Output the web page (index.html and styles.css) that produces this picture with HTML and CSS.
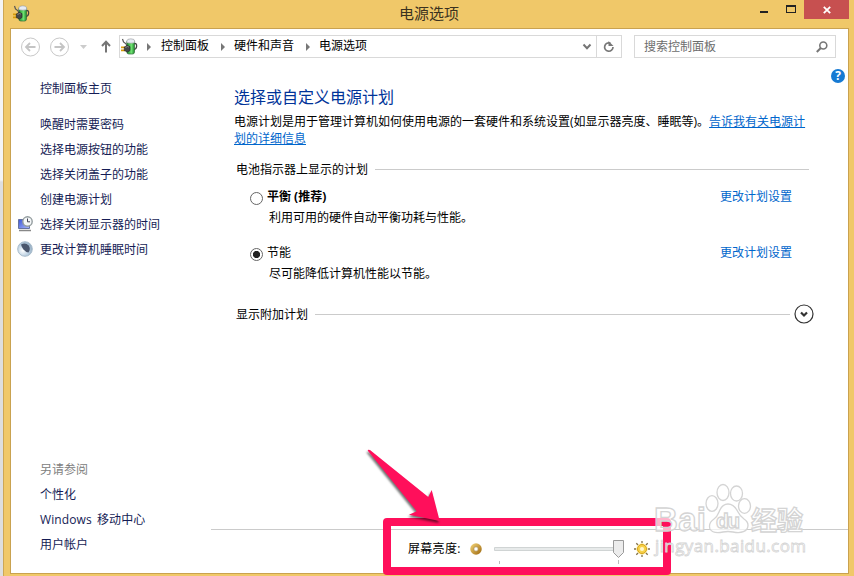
FILE: index.html
```html
<!DOCTYPE html>
<html lang="zh-CN">
<head>
<meta charset="utf-8">
<title>电源选项</title>
<link rel="stylesheet" href="styles.css">
</head>
<body>
<svg class="defs" width="0" height="0" aria-hidden="true">
  <defs>
    <linearGradient id="green" x1="0" x2="1"><stop offset="0" stop-color="#1b8a28"/><stop offset=".6" stop-color="#6fe272"/><stop offset="1" stop-color="#1f8a2c"/></linearGradient>
    <linearGradient id="blue" x1="0" x2="1" y1="0" y2="1"><stop offset="0" stop-color="#3c55d8"/><stop offset="1" stop-color="#a9b8fa"/></linearGradient>
    <linearGradient id="gold" x1="0" x2="1" y1="0" y2="1"><stop offset="0" stop-color="#e8c66a"/><stop offset="1" stop-color="#a9761c"/></linearGradient>
    <radialGradient id="moon" cx=".35" cy=".6" r=".7"><stop offset="0" stop-color="#fff"/><stop offset=".6" stop-color="#b9cfe2"/><stop offset="1" stop-color="#8da5ba"/></radialGradient>
    <symbol id="power" viewBox="0 0 17 17">
      <path d="M13 5.500q3-.5 2.600 3-.2 2.600-3 3.300" fill="none" stroke="#444" stroke-width="1.300"/>
      <rect x="5.800" y="2" width="7.700" height="14" rx="2" fill="url(#green)" stroke="#2f6a38" stroke-width=".7"/>
      <path d="M5.800 3q.2-2.200 4-2.200t3.900 2.200v1.700q-4 1-7.900 0z" fill="#e6ebf3" stroke="#888" stroke-width=".5"/>
      <path d="M1.500 1l1 3 2.500 1.800 1 2.500" fill="none" stroke="#555" stroke-width="1.200"/>
      <path d="M0 9.400h4M0 12.400h4" stroke="#d79b08" stroke-width="1.600"/>
      <path d="M3.300 9l3-1.600 2.700 1.200v3.900l-2.500 1.500-3.200-1.400z" fill="#454848" stroke="#222" stroke-width=".6"/>
      <path d="M4.500 9.500l2-1 1.400.6" fill="none" stroke="#999" stroke-width=".8"/>
    </symbol>
  </defs>
</svg>
<div class="window">
  <header class="titlebar">
    <svg class="app-icon" width="17" height="17"><use href="#power"/></svg>
    <h1>电源选项</h1>
    <div class="controls">
      <svg class="min" width="8" height="19"><path d="M0 11h8v2H0z" fill="#222"/></svg>
      <svg class="max" width="10" height="19"><path d="M0 5h10v8H0zM1 7v5h8V7z" fill="#222" fill-rule="evenodd"/></svg>
      <div class="close"><svg width="8" height="8"><path d="M.8.8l6.400 6.400M7.200.8L.8 7.200" stroke="#fff" stroke-width="1.800"/></svg></div>
    </div>
  </header>
  <div class="client">
    <nav class="nav">
      <svg class="arrows" width="108" height="23" fill="none" stroke="#c8c8c8">
        <circle cx="19.500" cy="12" r="9"/><path d="M15 12h9.500M19 8l-4 4 4 4" stroke="#c4c4c4" stroke-width="1.800"/>
        <circle cx="48.500" cy="12" r="9"/><path d="M43.500 12H53M49 8l4 4-4 4" stroke="#c4c4c4" stroke-width="1.800"/>
        <path d="M69 10h7l-3.500 4z" fill="#ccc" stroke="none"/>
        <path d="M95 17.500V7M91 11l4-4.200 4 4.200" stroke="#757575" stroke-width="2"/>
      </svg>
      <div class="address">
        <svg class="crumb-icon" width="17" height="17"><use href="#power"/></svg>
        <i class="sep first"></i><span>控制面板</span>
        <i class="sep"></i><span>硬件和声音</span>
        <i class="sep"></i><span>电源选项</span>
        <svg class="drop" width="10" height="8"><path d="M1.500 1.500L5 5.200l3.500-3.700" fill="none" stroke="#757575" stroke-width="2"/></svg>
        <div class="refresh"><svg width="12" height="12"><path d="M7.500 2.200A4.200 4.200 0 1 0 10 6" fill="none" stroke="#777" stroke-width="1.700"/><path d="M5.500 0v5h5z" fill="#777"/></svg></div>
      </div>
      <div class="search"><span>搜索控制面板</span>
        <svg width="12" height="12" fill="none" stroke="#777"><circle cx="7.300" cy="4.500" r="3.500" stroke-width="1.600"/><path d="M4.800 7L.8 11" stroke-width="2"/></svg>
      </div>
    </nav>
    <div class="help">?</div>
    <div class="body">
      <aside class="sidebar">
        <a class="home">控制面板主页</a>
        <a>唤醒时需要密码</a>
        <a>选择电源按钮的功能</a>
        <a>选择关闭盖子的功能</a>
        <a>创建电源计划</a>
        <a><svg width="16" height="16"><path d="M1.500 3.500h11v9h-11z" fill="url(#blue)" stroke="#6572a0"/><path d="M2 14.500h12" stroke="#888" stroke-width="1.500"/><circle cx="10.500" cy="5.500" r="4.700" fill="#f4f7f8" stroke="#929b9d" stroke-width="1.400"/><path d="M10.500 2.500v3.300h2.500" fill="none" stroke="#445"/></svg>选择关闭显示器的时间</a>
        <a><svg width="16" height="16"><circle cx="8" cy="8" r="7.300" fill="url(#moon)" stroke="#a9bccb"/><path d="M4 3.500q4.500-2.500 7.700 1 2.300 3.500-.2 7-3-.5-5-3T4 3.500z" fill="#4a566c"/></svg>更改计算机睡眠时间</a>
        <div class="see">另请参阅</div>
        <a>个性化</a>
        <a class="mobility">Windows 移动中心</a>
        <a>用户帐户</a>
      </aside>
      <main class="main">
        <section class="content">
          <h2>选择或自定义电源计划</h2>
          <p class="intro">电源计划是用于管理计算机如何使用电源的一套硬件和系统设置(如显示器亮度、睡眠等)。<a>告诉我有关电源计划的详细信息</a></p>
          <div class="group"><span>电池指示器上显示的计划</span><hr></div>
          <div class="plan">
            <i class="radio"></i>
            <div class="text"><b>平衡 (推荐)</b><p>利用可用的硬件自动平衡功耗与性能。</p></div>
            <a>更改计划设置</a>
          </div>
          <div class="plan">
            <i class="radio on"></i>
            <div class="text"><span>节能</span><p>尽可能降低计算机性能以节能。</p></div>
            <a>更改计划设置</a>
          </div>
          <div class="group more"><span>显示附加计划</span><hr>
            <svg width="20" height="20" fill="none" stroke="#333"><circle cx="10" cy="10" r="9" stroke-width="1.200"/><path d="M7 8.500l3 3 3-3" stroke-width="2.200"/></svg>
          </div>
        </section>
        <footer class="brightness">
          <span>屏幕亮度:</span>
          <svg class="dim" width="12" height="12"><circle cx="6" cy="6" r="4" fill="#fff" stroke="url(#gold)" stroke-width="3.500"/><circle cx="6" cy="6" r="2.200" fill="#fff" stroke="#97732c" stroke-width=".6"/></svg>
          <svg class="slider" width="131" height="26"><path d="M.5 9.500h129v3H.5z" fill="#e7eaea" stroke="#d0d4d4"/><path d="M5.500 23v4M124.500 22v4" stroke="#bbb"/><path d="M119.500 2.500h10v12l-5 5-5-5z" fill="#ececec" stroke="#9a9a9a"/></svg>
          <svg class="bright" width="16" height="16"><path d="M8 0v16M0 8h16M2.300 2.300l11.400 11.400M13.700 2.300L2.300 13.700" stroke="#80704a" stroke-width="1.300"/><circle cx="8" cy="8" r="5.400" fill="#f8d851" stroke="#fff7d0"/><circle cx="8" cy="8" r="4.500" fill="#f7d24b" stroke="#d9a51c"/><circle cx="8" cy="8" r="2" fill="#fff8cf"/></svg>
        </footer>
      </main>
    </div>
  </div>
</div>
<div class="highlight"></div>
<svg class="pointer" width="90" height="90"><path d="M8 11q-1-2 2-1L68.300 57l3.400-7 8 31-30.700-6.300 7.700-3.400z" fill="#ff0f5b"/></svg>
<svg class="watermark" width="170" height="84">
  <g fill="#fff" fill-opacity=".7" stroke="#d4d4d4" stroke-width="1.300">
    <text class="brand" x="4" y="51" textLength="52">Bai</text>
    <ellipse cx="62" cy="23.500" rx="6" ry="7.800"/><ellipse cx="73" cy="12.500" rx="6" ry="8"/><ellipse cx="86.500" cy="13.500" rx="6" ry="7.500"/><ellipse cx="94.500" cy="26" rx="6" ry="7.300"/>
    <path d="M78 24q6 0 10 8 2 4 6 7 6 4 3 10-4 5-14 3-5-1-10 0-10 2-13-3-2-6 4-10 3-2 5-7 3-8 9-8z"/>
    <text class="du" x="66" y="48" textLength="24">du</text>
    <text class="cn" x="101" y="50" textLength="52">经验</text>
    <text class="url" x="5" y="72" textLength="151">jingyan.baidu.com</text>
  </g>
</svg>
</body>
</html>
```
FILE: styles.css
```css
* { box-sizing: border-box; }
body {
  margin: 0;
  width: 854px;
  height: 576px;
  overflow: hidden;
  position: relative;
  background: linear-gradient(#f4f4f4 0 180px, #dedede 182px);
  font: 12px/17px "Open Sans", "Noto Sans CJK SC", sans-serif;
  color: #000;
}
h1, h2, p { margin: 0; font-weight: 400; }
svg { display: block; flex: none; }
.defs { position: absolute; }
.window {
  margin-left: 3px;
  height: 576px;
  background: #f0c869;
  border-left: 1px solid #cda755;
}
.titlebar { display: flex; height: 28px; padding-left: 9px; }
.app-icon { margin-top: 5px; }
.titlebar h1 {
  width: 370px;
  margin-left: 369px;
  font-size: 15px;
  line-height: 27px;
  color: #3b3220;
}
.controls { display: flex; margin-left: -9px; height: 19px; }
.max { margin-left: 18px; }
.close {
  width: 45px;
  height: 19px;
  margin-left: 8px;
  background: #c75050;
  display: flex;
  align-items: center;
  justify-content: center;
}
.client {
  position: relative;
  width: 839px;
  height: 546px;
  margin-left: 6px;
  border: 1px solid #c9a250;
  background: #fff;
}
.nav { display: flex; height: 29px; padding-top: 6px; }
.address, .search {
  display: flex;
  align-items: center;
  height: 23px;
  border: 1px solid #d9d9d9;
  line-height: 20px;
}
.address { width: 503px; padding-left: 1px; }
.address span { position: relative; top: -1px; }
.sep {
  margin: 0 9px 0 12px;
  border: 4px solid transparent;
  border-left-color: #777;
  border-right: 0;
}
.sep.first { margin-left: 9px; margin-right: 10px; }
.drop { margin-left: auto; margin-right: 4px; }
.refresh {
  width: 25px;
  height: 21px;
  border-left: 1px solid #d9d9d9;
  display: flex;
  align-items: center;
  justify-content: center;
}
.search {
  width: 202px;
  margin-left: 12px;
  padding: 0 7px 0 9px;
  justify-content: space-between;
  color: #6d6d6d;
}
.help {
  position: absolute;
  left: 820px;
  top: 40px;
  width: 14px;
  height: 14px;
  border-radius: 50%;
  background: #167ad3;
  color: #fff;
  font-weight: 700;
  font-size: 12px;
  line-height: 14px;
  text-align: center;
}
.body { display: flex; height: 515px; }
.sidebar { width: 200px; padding: 18px 0 0 29px; color: #151c55; }
.sidebar a, .see { display: flex; align-items: center; height: 25px; }
.sidebar svg { margin: -1px 7px 0 -23px; }
.sidebar .home { margin-bottom: 11px; }
.sidebar .mobility { word-spacing: 2px; letter-spacing: .1px; }
.see { margin-top: 195px; color: #808080; }
.main { width: 637px; display: flex; flex-direction: column; }
.content { height: 471px; padding: 27px 0 0 23px; }
h2 { font-size: 16px; line-height: 24px; color: #003399; }
.intro { width: 577px; margin-top: 4px; word-break: break-all; }
.content a { color: #0066cc; }
.intro a { text-decoration: underline; }
.group {
  display: flex;
  align-items: center;
  gap: 7px;
  width: 573px;
  height: 20px;
  margin: 12px 0 0 2px;
}
.group hr { flex: 1; margin: 0; border: 0; border-top: 1px solid #cbcbcb; }
.plan {
  display: flex;
  height: 56px;
  padding-left: 16px;
}
.group + .plan { margin-top: 9px; }
.radio {
  width: 13px;
  height: 13px;
  margin-top: 4px;
  border: 1px solid #666;
  border-radius: 50%;
}
.radio.on { background: radial-gradient(circle, #222 0 3.200px, #fff 4px); }
.text { width: 457px; padding-left: 4px; }
.text p { margin: 4px 0 0 2px; }
.group.more { margin-top: 4px; width: 578px; }
.more hr { margin-right: -3px; }
.brightness {
  display: flex;
  align-items: center;
  height: 44px;
  border-top: 1px solid #cbcbcb;
  padding: 0 0 6px 197px;
}
.brightness span { width: 55px; letter-spacing: .3px; }
.dim { margin-left: 7px; }
.slider { margin: 4px 0 0 12px; }
.bright { margin-left: 9px; }
.highlight {
  position: absolute;
  left: 383px;
  top: 518px;
  width: 288px;
  height: 57px;
  border: 8px solid #ff0f5b;
  border-radius: 4px;
}
.pointer {
  position: absolute;
  left: 360px;
  top: 440px;
  filter: drop-shadow(-1px 2px 1px rgba(0, 0, 0, .55));
}
.watermark { position: absolute; left: 650px; top: 480px; }
.brand, .du { font: bold 33px "Liberation Sans", sans-serif; }
.du { font-size: 21px; }
.cn { font: bold 26px "Noto Sans CJK SC", sans-serif; }
.url { font: 17px "Open Sans", sans-serif; stroke-width: .8px; }
```
